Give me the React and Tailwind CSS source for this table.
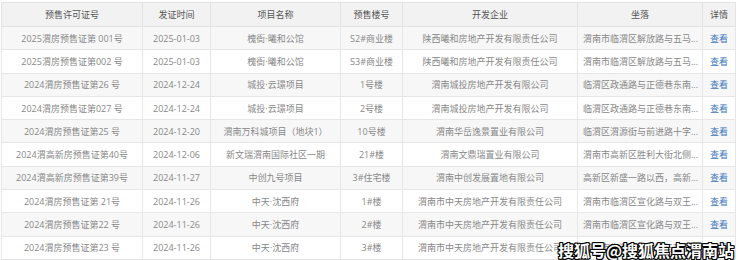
const ROWS = [
  ['2025渭房预售证第 001号', '2025-01-03', '槐衙·曦和公馆', 'S2#商业楼', '陕西曦和房地产开发有限责任公司', '渭南市临渭区解放路与五马...'],
  ['2025渭房预售证第002 号', '2025-01-03', '槐衙·曦和公馆', 'S3#商业楼', '陕西曦和房地产开发有限责任公司', '渭南市临渭区解放路与五马...'],
  ['2024渭房预售证第26 号', '2024-12-24', '城投·云璟项目', '1号楼', '渭南城投房地产开发有限公司', '临渭区政通路与正德巷东南...'],
  ['2024渭房预售证第027 号', '2024-12-24', '城投·云璟项目', '2号楼', '渭南城投房地产开发有限公司', '临渭区政通路与正德巷东南...'],
  ['2024渭房预售证第25 号', '2024-12-20', '渭南万科城项目（地块1）', '10号楼', '渭南华岳逸景置业有限公司', '临渭区渭源街与前进路十字...'],
  ['2024渭高新房预售证第40号', '2024-12-06', '新文瑞渭南国际社区一期', '21#楼', '渭南文鼎瑞置业有限公司', '渭南市高新区胜利大街北侧...'],
  ['2024渭高新房预售证第39号', '2024-11-27', '中创九号项目', '3#住宅楼', '渭南中创发展置地有限公司', '高新区新盛一路以西，高新...'],
  ['2024渭房预售证第 21号', '2024-11-26', '中天·沈西府', '1#楼', '渭南市中天房地产开发有限责任公司', '渭南市临渭区宣化路与双王...'],
  ['2024渭房预售证第22 号', '2024-11-26', '中天·沈西府', '2#楼', '渭南市中天房地产开发有限责任公司', '渭南市临渭区宣化路与双王...'],
  ['2024渭房预售证第23 号', '2024-11-26', '中天·沈西府', '3#楼', '渭南市中天房地产开发有限责任公司', '渭南市临渭区宣化路与双王...'],
];

const HEAD = ['预售许可证号', '发证时间', '项目名称', '预售楼号', '开发企业', '坐落', '详情'];
const WIDTHS = ['w-[141px]', 'w-[68px]', 'w-[130px]', 'w-[62px]', 'w-[175px]', 'w-[125px]', 'w-[33px]'];

export default function App() {
  return (
    <div
      className="relative h-[260px] w-[740px] overflow-hidden bg-white pl-[1px] pt-[2px]"
      style={{ fontFamily: '"Open Sans", "Noto Sans CJK SC", sans-serif' }}
    >
      <table className="table-fixed border-collapse text-[9px] leading-none">
        <colgroup>
          {WIDTHS.map((w, i) => (
            <col key={i} className={w} />
          ))}
        </colgroup>
        <thead>
          <tr className="h-[24px] bg-[#f2f2f2] text-[#555]">
            {HEAD.map((h) => (
              <th key={h} className="border border-[#e3e3e3] font-normal">{h}</th>
            ))}
          </tr>
        </thead>
        <tbody className="text-[#888]">
          {ROWS.map((r, i) => (
            <tr key={i} className={`h-[23.3px] ${i % 2 === 0 ? 'bg-[#f7f7f7]' : 'bg-white'}`}>
              <td className="border border-[#e6e6e6] text-center">{r[0]}</td>
              <td className="border border-[#e6e6e6] text-center">{r[1]}</td>
              <td className="border border-[#e6e6e6] text-center">{r[2]}</td>
              <td className="border border-[#e6e6e6] text-center">{r[3]}</td>
              <td className="border border-[#e6e6e6] text-center">{r[4]}</td>
              <td className="overflow-hidden border border-[#e6e6e6] pl-[5px] text-left whitespace-nowrap">{r[5]}</td>
              <td className="border border-[#e6e6e6] text-center text-[#3b76c0]">查看</td>
            </tr>
          ))}
        </tbody>
      </table>
      <div
        className="absolute bottom-[2px] right-[6px] text-[16px] font-bold leading-none text-white"
        style={{
          fontFamily: '"Noto Sans CJK SC", sans-serif',
          textShadow: '1px 1px 0 #000, -1px -1px 0 #000, 1px -1px 0 #000, -1px 1px 0 #000, 0 1px 0 #000, 1px 0 0 #000, 0 -1px 0 #000, -1px 0 0 #000',
        }}
      >
        搜狐号@搜狐焦点渭南站
      </div>
    </div>
  );
}
